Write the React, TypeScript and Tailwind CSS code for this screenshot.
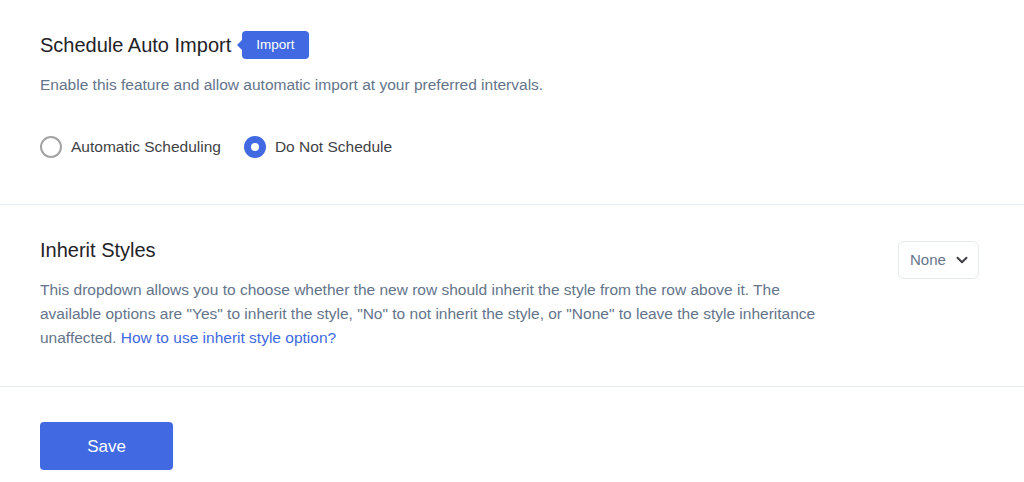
import React, { useState } from 'react';

const font = { fontFamily: '"Liberation Sans", Arial, sans-serif' };

type RadioProps = {
  label: string;
  checked: boolean;
  onSelect: () => void;
};

const Radio: React.FC<RadioProps> = ({ label, checked, onSelect }) => (
  <button type="button" onClick={onSelect} className="flex items-center gap-[9px]">
    {checked ? (
      <span className="flex h-[22px] w-[22px] items-center justify-center rounded-full bg-[#4169e1]">
        <span className="h-[8px] w-[8px] rounded-full bg-white" />
      </span>
    ) : (
      <span className="h-[22px] w-[22px] rounded-full border-2 border-[#a3a3a3] bg-white" />
    )}
    <span className="text-[15.5px] text-[#3f3f46]">{label}</span>
  </button>
);

export default function App() {
  const [mode, setMode] = useState<'auto' | 'none'>('none');

  return (
    <div className="min-h-screen w-full bg-white" style={font}>
      {/* Schedule Auto Import */}
      <section className="border-b border-[#e8edf3] px-10 pb-[46px] pt-[31px]">
        <div className="flex items-center gap-[11px]">
          <h2 className="text-[20px] leading-7 text-[#1f2328]">Schedule Auto Import</h2>
          <span className="relative flex h-7 items-center rounded-[4px] bg-[#4169e1] px-[14px] text-[13.5px] text-white">
            <span className="absolute left-[-5px] top-1/2 h-0 w-0 -translate-y-1/2 border-y-[5px] border-r-[5px] border-y-transparent border-r-[#4169e1]" />
            Import
          </span>
        </div>
        <p className="mt-[14px] text-[15.5px] leading-6 text-[#64748b]">
          Enable this feature and allow automatic import at your preferred intervals.
        </p>
        <div className="mt-[38px] flex items-center gap-[23px]">
          <Radio label="Automatic Scheduling" checked={mode === 'auto'} onSelect={() => setMode('auto')} />
          <Radio label="Do Not Schedule" checked={mode === 'none'} onSelect={() => setMode('none')} />
        </div>
      </section>

      {/* Inherit Styles */}
      <section className="border-b border-[#e8edf3] px-10 pb-[36px] pt-[31px]">
        <div className="flex items-start justify-between">
          <div>
            <h2 className="text-[20px] leading-7 text-[#1f2328]">Inherit Styles</h2>
            <p className="mt-[14px] max-w-[800px] text-[15.5px] leading-6 text-[#64748b]">
              This dropdown allows you to choose whether the new row should inherit the style from the row above it. The
              available options are "Yes" to inherit the style, "No" to not inherit the style, or "None" to leave the style
              inheritance unaffected.{' '}
              <a href="#" className="text-[#4169e1]">How to use inherit style option?</a>
            </p>
          </div>
          <button
            type="button"
            className="mr-[5px] mt-[5px] flex h-[38px] w-[81px] shrink-0 items-center justify-between rounded-md border border-[#e5e9f0] pl-[11px] pr-[7px] text-[15px] text-[#64748b]"
          >
            None
            <svg width="18" height="18" viewBox="0 0 24 24" fill="none" stroke="#3f3f46" strokeWidth="2.6" strokeLinecap="round" strokeLinejoin="round">
              <path d="M6 9l6 6 6-6" />
            </svg>
          </button>
        </div>
      </section>

      {/* Footer */}
      <div className="px-10 pt-[35px]">
        <button type="button" className="h-12 w-[133px] rounded-[4px] bg-[#4169e1] text-[17px] text-white">
          Save
        </button>
      </div>
    </div>
  );
}
